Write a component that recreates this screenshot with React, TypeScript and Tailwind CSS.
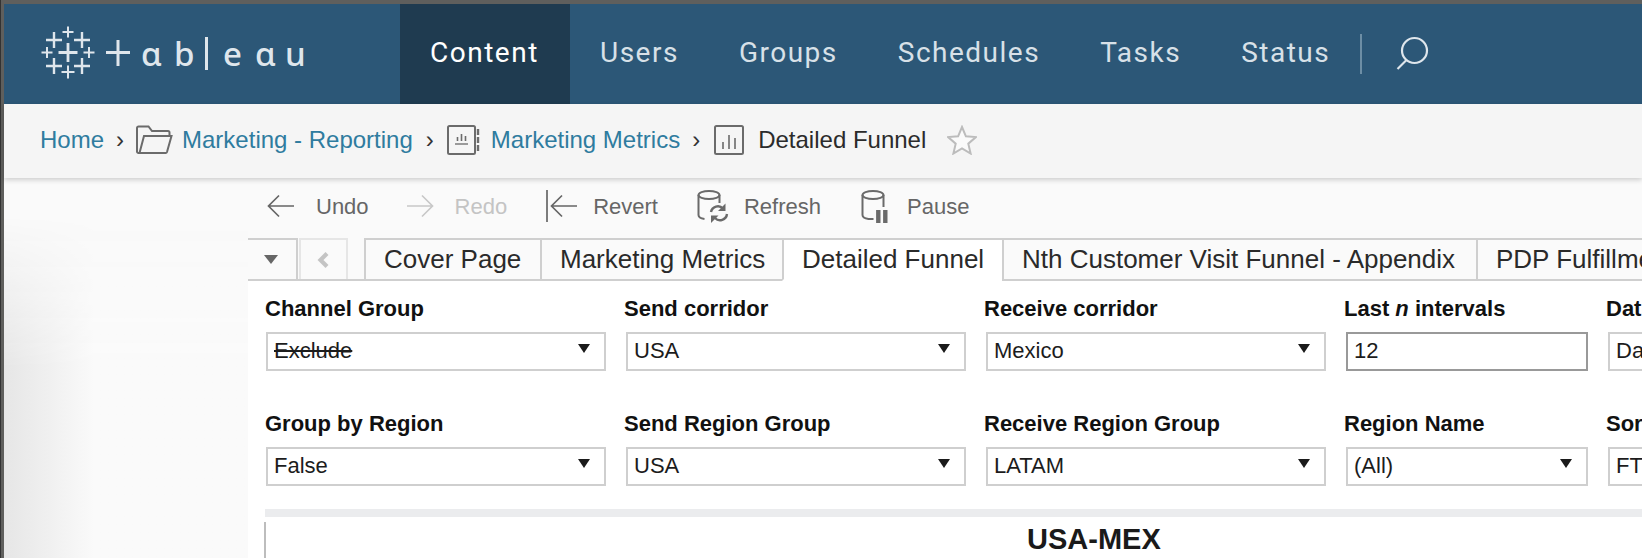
import React from "react";

const Plus = ({ x, y, r, w = 2 }: { x: number; y: number; r: number; w?: number }) => (
  <path d={`M${x - r} ${y}H${x + r}M${x} ${y - r}V${y + r}`} strokeWidth={w} />
);

const LogoMark = () => (
  <svg width="56" height="56" viewBox="0 0 56 56" fill="none" stroke="#dfe6ec" className="shrink-0">
    <Plus x={27} y={6} r={5.500} />
    <Plus x={13} y={14} r={8} w={2.400} />
    <Plus x={41} y={14} r={8} w={2.400} />
    <Plus x={6} y={26.500} r={5.500} />
    <Plus x={27} y={26.500} r={9.500} w={2.800} />
    <Plus x={48} y={26.500} r={5.500} />
    <Plus x={13} y={40} r={8} w={2.400} />
    <Plus x={41} y={40} r={8} w={2.400} />
    <Plus x={27} y={46} r={6.500} />
  </svg>
);

const Chevron = ({ className = "" }: { className?: string }) => (
  <span className={`font-['Liberation_Sans',sans-serif] text-[24px] leading-none text-[#333] ${className}`}>›</span>
);

const Folder = () => (
  <svg width="37" height="30" viewBox="0 0 37 30" fill="none" stroke="#6b6b6b" strokeWidth="2" className="shrink-0">
    <path d="M5 28H2.500a1.500 1.500 0 0 1-1.500-1.500V3a1.500 1.500 0 0 1 1.500-1.500h10L16 6h16a1.500 1.500 0 0 1 1.500 1.500V11" />
    <path d="M8 11h27.500L31 27a1.500 1.500 0 0 1-1.500 1H3.500z" />
  </svg>
);

const Book = () => (
  <svg width="33" height="30" viewBox="0 0 33 30" fill="none" stroke="#6b6b6b" strokeWidth="2" className="shrink-0">
    <rect x="1" y="1" width="27" height="28" rx="1.500" />
    <path d="M31 4v6M31 12v6M31 20v6" strokeWidth="2.400" />
    <path d="M8 19h13" stroke="#9a9a9a" />
    <path d="M10.500 16v-4M14.500 16V9M18.500 16v-5" strokeWidth="1.600" />
  </svg>
);

const Sheet = () => (
  <svg width="30" height="30" viewBox="0 0 30 30" fill="none" stroke="#6b6b6b" strokeWidth="2" className="shrink-0">
    <rect x="1" y="1" width="28" height="28" rx="1.500" />
    <path d="M9 24v-7M15 24V10M21 24v-11" strokeWidth="1.600" />
  </svg>
);

const Star = () => (
  <svg width="30" height="30" viewBox="0 0 30 30" fill="#fafafa" stroke="#bcbcbc" strokeWidth="2" className="shrink-0">
    <path d="M15 2l3.900 9.300 10 .8-7.600 6.600 2.300 9.800L15 23.300l-8.600 5.200 2.300-9.800L1.100 12.100l10-.8z" />
  </svg>
);

const Search = () => (
  <svg width="34" height="34" viewBox="0 0 34 34" fill="none" stroke="#dfe6ec" strokeWidth="2.200" className="shrink-0">
    <circle cx="19.500" cy="14.500" r="12.500" />
    <path d="M11.500 24L2.500 33" />
  </svg>
);

const NAV = ["Content", "Users", "Groups", "Schedules", "Tasks", "Status"];

const ToolIcon = ({ name }: { name: string }) => {
  if (name === "Undo")
    return (
      <svg width="27" height="24" viewBox="0 0 27 24" fill="none" stroke="#666" strokeWidth="1.700" className="shrink-0">
        <path d="M27 12H1.500M12 1.500L1.500 12 12 22.500" />
      </svg>
    );
  if (name === "Redo")
    return (
      <svg width="27" height="24" viewBox="0 0 27 24" fill="none" stroke="#c8c8c8" strokeWidth="1.700" className="shrink-0">
        <path d="M0 12h25.500M15 1.500L25.500 12 15 22.500" />
      </svg>
    );
  if (name === "Revert")
    return (
      <svg width="31" height="32" viewBox="0 0 31 32" fill="none" stroke="#666" strokeWidth="1.700" className="shrink-0">
        <path d="M1 0v32M31 16H5.500M16 5.500L5.500 16 16 26.500" />
      </svg>
    );
  if (name === "Refresh")
    return (
      <svg width="32" height="33" viewBox="0 0 32 33" fill="none" stroke="#6a6a6a" strokeWidth="2" className="shrink-0">
        <ellipse cx="12" cy="5" rx="10.500" ry="4" />
        <path d="M1.500 5v20c0 2 2 3.500 6 4M22.500 5v8" />
        <path d="M14 22a7 7 0 0 1 12-3.500M30 24a7 7 0 0 1-12 4" strokeWidth="2.400" />
        <path d="M28.500 13.500v7.500H21z" fill="#6a6a6a" strokeWidth="0" />
        <path d="M14 33v-7.500h7.500z" fill="#6a6a6a" strokeWidth="0" />
      </svg>
    );
  return (
    <svg width="31" height="33" viewBox="0 0 31 33" fill="none" stroke="#6a6a6a" strokeWidth="2" className="shrink-0">
      <ellipse cx="12" cy="5" rx="10.500" ry="4" />
      <path d="M1.500 5v20c0 2 2 3.500 6 4h5M22.500 5v12" />
      <path d="M17.300 20v13M24.300 20v13" strokeWidth="4.400" />
    </svg>
  );
};

const TOOLS = [
  { name: "Undo", x: "ml-[19px]", gap: "gap-[22px]", color: "text-[#666]" },
  { name: "Redo", x: "ml-[38px]", gap: "gap-[21px]", color: "text-[#c4c4c4]" },
  { name: "Revert", x: "ml-[39px]", gap: "gap-[16px]", color: "text-[#666]" },
  { name: "Refresh", x: "ml-[39px]", gap: "gap-[15px]", color: "text-[#666]" },
  { name: "Pause", x: "ml-[40px]", gap: "gap-[15px]", color: "text-[#666]" },
];

const TABS = [
  { label: "Cover Page", w: "w-[178px]" },
  { label: "Marketing Metrics", w: "w-[244px]" },
  { label: "Detailed Funnel", w: "w-[222px]", active: true },
  { label: "Nth Customer Visit Funnel - Appendix", w: "w-[476px]" },
  { label: "PDP Fulfillme", w: "w-[300px]" },
];

const Caret = () => (
  <svg width="12" height="9" viewBox="0 0 12 9" fill="#1a1a1a" className="absolute right-[14px] top-[10px]">
    <path d="M0 0h12L6 9z" />
  </svg>
);

type F = { label: React.ReactNode; value: string; w: string; caret?: boolean; strike?: boolean; input?: boolean };

const ROWS: F[][] = [
  [
    { label: "Channel Group", value: "Exclude", w: "w-[341px]", caret: true, strike: true },
    { label: "Send corridor", value: "USA", w: "w-[341px]", caret: true },
    { label: "Receive corridor", value: "Mexico", w: "w-[341px]", caret: true },
    { label: <>Last <i>n</i> intervals</>, value: "12", w: "w-[243px]", input: true },
    { label: "Dat", value: "Da", w: "w-[60px]" },
  ],
  [
    { label: "Group by Region", value: "False", w: "w-[341px]", caret: true },
    { label: "Send Region Group", value: "USA", w: "w-[341px]", caret: true },
    { label: "Receive Region Group", value: "LATAM", w: "w-[341px]", caret: true },
    { label: "Region Name", value: "(All)", w: "w-[243px]", caret: true },
    { label: "Sor", value: "FT", w: "w-[60px]" },
  ],
];

const Filter = ({ f, first }: { f: F; first: boolean }) => (
  <div className={`${f.w} shrink-0`}>
    <div className={`h-[26px] text-[22px] font-bold leading-[26px] whitespace-nowrap text-[#111] ${first ? "" : "-ml-[1px]"}`}>{f.label}</div>
    <div
      className={`relative mt-[10px] ml-[1px] h-[39px] border-2 bg-white pl-[6px] text-[22px] leading-[34px] text-[#1c1c1c] ${
        f.input ? "border-[#999]" : "border-[#cfcfcf]"
      }`}
    >
      <span className={f.strike ? "line-through" : ""}>{f.value}</span>
      {f.caret && <Caret />}
    </div>
  </div>
);

const Letter = ({ c, w }: { c: string; w: string }) => <span className={`${w} shrink-0`}>{c}</span>;

export default function App() {
  return (
    <div className="flex h-[558px] w-[1642px] flex-col overflow-hidden border-l border-[#333] bg-[#5f5f5d] pt-[4px] pl-[3px] font-['Liberation_Sans',Arial,sans-serif]">
      <header className="flex h-[100px] shrink-0 items-center bg-[#2c5777]">
        <div className="flex h-full w-[396px] shrink-0 items-center pl-[37px]">
          <LogoMark />
          <svg width="24" height="26" viewBox="0 0 24 26" fill="none" stroke="#dfe6ec" className="mb-[2px] ml-[9px] shrink-0">
            <path d="M0 12.500H24M12 0V26" strokeWidth="3" />
          </svg>
          <div className="mb-[2px] ml-[11px] flex items-center font-['Noto_Sans',sans-serif] text-[33px] font-medium leading-none text-[#dfe6ec]">
            <Letter c="ɑ" w="w-[33px]" />
            <Letter c="b" w="w-[31px]" />
            <span className="mr-[15px] h-[33px] w-[3px] shrink-0 bg-[#dfe6ec]" />
            <Letter c="e" w="w-[32px]" />
            <Letter c="ɑ" w="w-[30px]" />
            <Letter c="u" w="w-[20px]" />
          </div>
        </div>
        <nav className="flex h-full items-center">
          {NAV.map((n, i) => (
            <div
              key={n}
              className={`flex h-full items-center px-[30px] pb-[2px] font-['Roboto',sans-serif] text-[28px] tracking-[1.500px] ${
                i === 0 ? "w-[170px] bg-[#1f3b50] text-white" : "text-[#d8e1e8]"
              }`}
            >
              {n}
            </div>
          ))}
        </nav>
        <div className="h-[40px] w-[2px] bg-[#6d8ea5]" />
        <div className="mb-[2px] ml-[33px]">
          <Search />
        </div>
      </header>

      <div className="relative z-10 flex h-[74px] shrink-0 items-center bg-[#f5f5f5] pb-[2px] pl-[36px] text-[24px] whitespace-nowrap shadow-[0_2px_5px_rgba(0,0,0,0.18)]">
        <span className="text-[#2f7c9f]">Home</span>
        <Chevron className="ml-[12px]" />
        <span className="ml-[12px]"><Folder /></span>
        <span className="ml-[9px] text-[#2f7c9f]">Marketing - Reporting</span>
        <Chevron className="ml-[13px]" />
        <span className="ml-[13px]"><Book /></span>
        <span className="ml-[11px] text-[#2f7c9f]">Marketing Metrics</span>
        <Chevron className="ml-[12px]" />
        <span className="ml-[14px]"><Sheet /></span>
        <span className="ml-[14px] text-[#2b2b2b]">Detailed Funnel</span>
        <span className="ml-[21px]"><Star /></span>
      </div>

      <div className="flex min-h-0 flex-1 bg-[#fafafa]">
        <aside className="w-[244px] shrink-0">
          <div className="h-full bg-gradient-to-r from-[#e6e6e6] to-[#fafafa] to-[37%] [mask-image:linear-gradient(to_bottom,transparent_10%,black_50%)]" />
        </aside>
        <main className="min-w-0 flex-1 whitespace-nowrap">
          <div className="flex h-[60px] items-center pb-[4px] text-[22px]">
            {TOOLS.map((t) => (
              <div key={t.name} className={`flex items-center ${t.x} ${t.gap} ${t.color}`}>
                <ToolIcon name={t.name} />
                <span>{t.name}</span>
              </div>
            ))}
          </div>

          <div className="flex h-[43px] border-b-2 border-[#cfcfcf] text-[26px] leading-[38px] text-[#2a2a2a]">
            <div className="flex h-[41px] w-[50px] shrink-0 items-center justify-center border-t-2 border-r-2 border-[#cfcfcf] pr-[3px]">
              <svg width="14" height="9" viewBox="0 0 14 9" fill="#666"><path d="M0 0h14L7 9z" /></svg>
            </div>
            <div className="ml-[1px] flex h-[41px] w-[49px] shrink-0 items-center justify-center border-t-2 border-r-2 border-l-2 border-[#e6e6e6] pr-[2px]">
              <svg width="12" height="16" viewBox="0 0 12 16" fill="none" stroke="#c4c4c4" strokeWidth="4.200"><path d="M10 1.500L3.500 8l6.500 6.500" /></svg>
            </div>
            <div className="ml-[16px] flex shrink-0">
              {TABS.map((t) => (
                <div
                  key={t.label}
                  className={`${t.w} -ml-[2px] h-[43px] shrink-0 border-x-2 border-t-2 border-[#cfcfcf] pl-[18px] first:ml-0 ${
                    t.active ? "border-b-2 border-b-white bg-white" : ""
                  }`}
                >
                  {t.label}
                </div>
              ))}
            </div>
          </div>

          <div className="h-full bg-white pl-[17px]">
            <div className="flex flex-col gap-[40px] pt-[15px]">
              {ROWS.map((r, i) => (
                <div key={i} className="flex gap-[19px]">
                  {r.map((f, j) => (
                    <Filter key={j} f={f} first={j === 0} />
                  ))}
                </div>
              ))}
            </div>
            <div className="mt-[23px] h-[8px] bg-[#ebecee]" />
            <div className="mt-[5px] ml-[-1px] h-[40px] border-l-2 border-[#bdbdbd] pl-[761px] text-[29px] font-bold leading-[34px] text-[#1a1a1a]">
              USA-MEX
            </div>
          </div>
        </main>
      </div>
    </div>
  );
}
